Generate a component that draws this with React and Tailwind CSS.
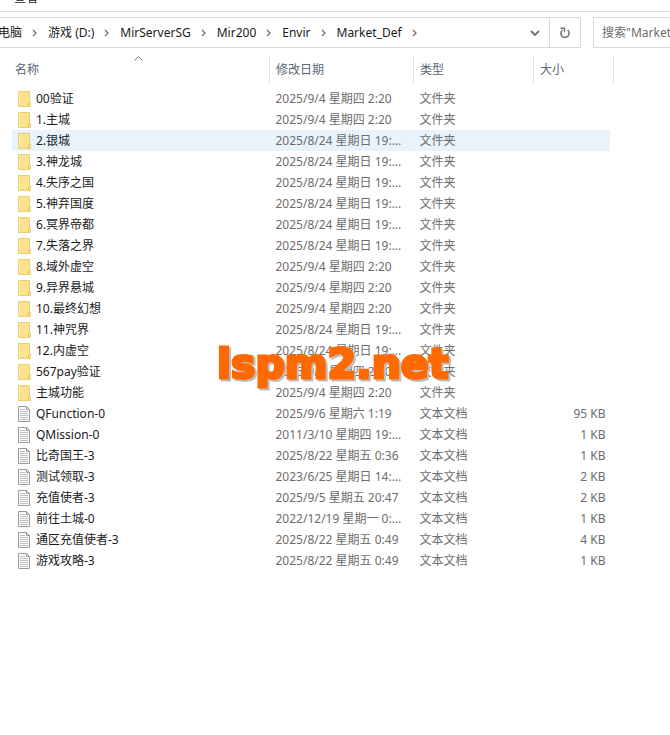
import React from 'react';

const PATH = ['电脑', '游戏 (D:)', 'MirServerSG', 'Mir200', 'Envir', 'Market_Def'];

const FILES = [
  { name: '00验证', date: '2025/9/4 星期四 2:20' },
  { name: '1.主城', date: '2025/9/4 星期四 2:20' },
  { name: '2.银城', date: '2025/8/24 星期日 19:...', active: true },
  { name: '3.神龙城', date: '2025/8/24 星期日 19:...' },
  { name: '4.失序之国', date: '2025/8/24 星期日 19:...' },
  { name: '5.神弃国度', date: '2025/8/24 星期日 19:...' },
  { name: '6.冥界帝都', date: '2025/8/24 星期日 19:...' },
  { name: '7.失落之界', date: '2025/8/24 星期日 19:...' },
  { name: '8.域外虚空', date: '2025/9/4 星期四 2:20' },
  { name: '9.异界悬城', date: '2025/9/4 星期四 2:20' },
  { name: '10.最终幻想', date: '2025/9/4 星期四 2:20' },
  { name: '11.神咒界', date: '2025/8/24 星期日 19:...' },
  { name: '12.内虚空', date: '2025/8/24 星期日 19:...' },
  { name: '567pay验证', date: '2025/9/4 星期四 2:20' },
  { name: '主城功能', date: '2025/9/4 星期四 2:20' },
  { name: 'QFunction-0', date: '2025/9/6 星期六 1:19', size: '95 KB' },
  { name: 'QMission-0', date: '2011/3/10 星期四 19:...', size: '1 KB' },
  { name: '比奇国王-3', date: '2025/8/22 星期五 0:36', size: '1 KB' },
  { name: '测试领取-3', date: '2023/6/25 星期日 14:...', size: '2 KB' },
  { name: '充值使者-3', date: '2025/9/5 星期五 20:47', size: '2 KB' },
  { name: '前往土城-0', date: '2022/12/19 星期一 0:...', size: '1 KB' },
  { name: '通区充值使者-3', date: '2025/8/22 星期五 0:49', size: '4 KB' },
  { name: '游戏攻略-3', date: '2025/8/22 星期五 0:49', size: '1 KB' },
];

const FolderIcon = () => (
  <svg width="14" height="16" viewBox="0 0 14 16" className="shrink-0" aria-hidden="true">
    <path d="M0.5 0.5h11v10.5h1v4.5h-12z" fill="#fbe28f" stroke="#eccf74" />
    <path d="M10.5 11.5v3.5" stroke="#e2c061" />
    <path d="M1.5 1.5v13" stroke="#fdedb4" />
  </svg>
);

const TextIcon = () => (
  <svg width="14" height="16" viewBox="0 0 14 16" className="shrink-0" aria-hidden="true">
    <path d="M0.5 0.5h8l3 3v12h-11z" fill="#fbfbfb" stroke="#9a9a9a" />
    <path d="M8.5 0.5v3h3" fill="none" stroke="#9a9a9a" />
    <path d="M2 3.5h5M2 5.5h8M2 7.5h8M2 9.5h8M2 11.5h8M2 13.5h8" stroke="#bcbfc2" />
  </svg>
);

const Chevron = () => (
  <svg width="26" height="10" viewBox="0 0 26 10" fill="none" aria-hidden="true">
    <path d="M11 2l3 3-3 3" stroke="#6f6f6f" strokeWidth="1.3" />
  </svg>
);

const AddressBar = () => (
  <div className="mt-[5px] flex h-[31px]">
    <div className="flex w-[581px] shrink-0 border border-l-0 border-[#d9d9d9]">
      <nav className="-ml-0.5 flex grow items-center text-[#1a1a1a]">
        {PATH.map((item) => (
          <React.Fragment key={item}>
            <a href="#" className="whitespace-nowrap">{item}</a>
            <Chevron />
          </React.Fragment>
        ))}
      </nav>
      <button aria-label="历史记录" className="flex w-7 items-center justify-center">
        <svg width="10" height="8" viewBox="0 0 10 8" fill="none">
          <path d="M1 2l4 4 4-4" stroke="#707070" strokeWidth="1.8" />
        </svg>
      </button>
      <button aria-label="刷新" className="flex w-[31px] items-center justify-center border-l border-[#d9d9d9]">
        <svg width="12" height="12" viewBox="0 0 12 12" fill="none">
          <path d="M8.6 3.2A4.1 4.1 0 1 1 3.6 3" stroke="#707070" strokeWidth="1.5" />
          <path d="M1.5 1.2h4v3.6" stroke="#707070" strokeWidth="1.4" />
        </svg>
      </button>
    </div>
    <input
      aria-label="搜索"
      placeholder={'搜索"Market_Def"'}
      className="ml-3 min-w-0 grow border border-r-0 border-[#d9d9d9] pl-2 placeholder:text-[#6d6d6d]"
    />
  </div>
);

const FileTable = () => (
  <table className="mt-2 ml-3 w-[602px] table-fixed text-left text-[#6d6d6d]">
    <colgroup>
      <col />
      <col className="w-[144px]" />
      <col className="w-[120px]" />
      <col className="w-[77px]" />
      <col className="w-[3px]" />
    </colgroup>
    <thead>
      <tr className="h-7 text-[#5c6675]">
        <th className="relative border-r border-[#e5e5e5] pl-[3px] font-normal">
          名称
          <svg width="9" height="5" viewBox="0 0 9 5" fill="none" className="absolute top-0 left-1/2 -ml-1.5">
            <path d="M0.5 4.5l4-4 4 4" stroke="#7a7a7a" />
          </svg>
        </th>
        <th className="border-r border-[#e5e5e5] pl-1.5 font-normal">修改日期</th>
        <th className="border-r border-[#e5e5e5] pl-1.5 font-normal">类型</th>
        <th colSpan={2} className="border-r border-[#e5e5e5] pl-1.5 font-normal">大小</th>
      </tr>
    </thead>
    <tbody className="before:block before:h-1">
      {FILES.map((file) => (
        <tr key={file.name} className={file.active ? 'h-[21px] *:bg-[#e8f3fc]' : 'h-[21px]'}>
          <td className="pl-1.5 text-[#1a1a1a]">
            <div className="flex items-center gap-1">
              {file.size ? <TextIcon /> : <FolderIcon />}
              <span>{file.name}</span>
            </div>
          </td>
          <td className="pl-1.5 whitespace-nowrap">{file.date}</td>
          <td className="pl-1.5">{file.size ? '文本文档' : '文件夹'}</td>
          <td className="pr-[5px] text-right">{file.size}</td>
        </tr>
      ))}
    </tbody>
  </table>
);

const App = () => {
  return (
    <div className="relative min-h-screen overflow-hidden bg-white font-['Noto_Sans','Noto_Sans_CJK_SC',sans-serif] text-[12px] leading-4">
      <header className="flex h-3 items-end overflow-hidden border-b border-[#dcdcdc] pb-[5px] pl-[14px]">
        <button className="text-[#1a1a1a]">查看</button>
      </header>
      <AddressBar />
      <FileTable />
      <div className="pointer-events-none absolute top-[340px] left-[217px] font-['DejaVu_Sans',sans-serif] text-[41px] leading-[48px] font-bold text-[#ff6a00] [-webkit-text-stroke:3px_#ff6a00] [filter:drop-shadow(2px_2px_0_#bdbdbd)]">
        lspm2.net
      </div>
    </div>
  );
};

export default App;
